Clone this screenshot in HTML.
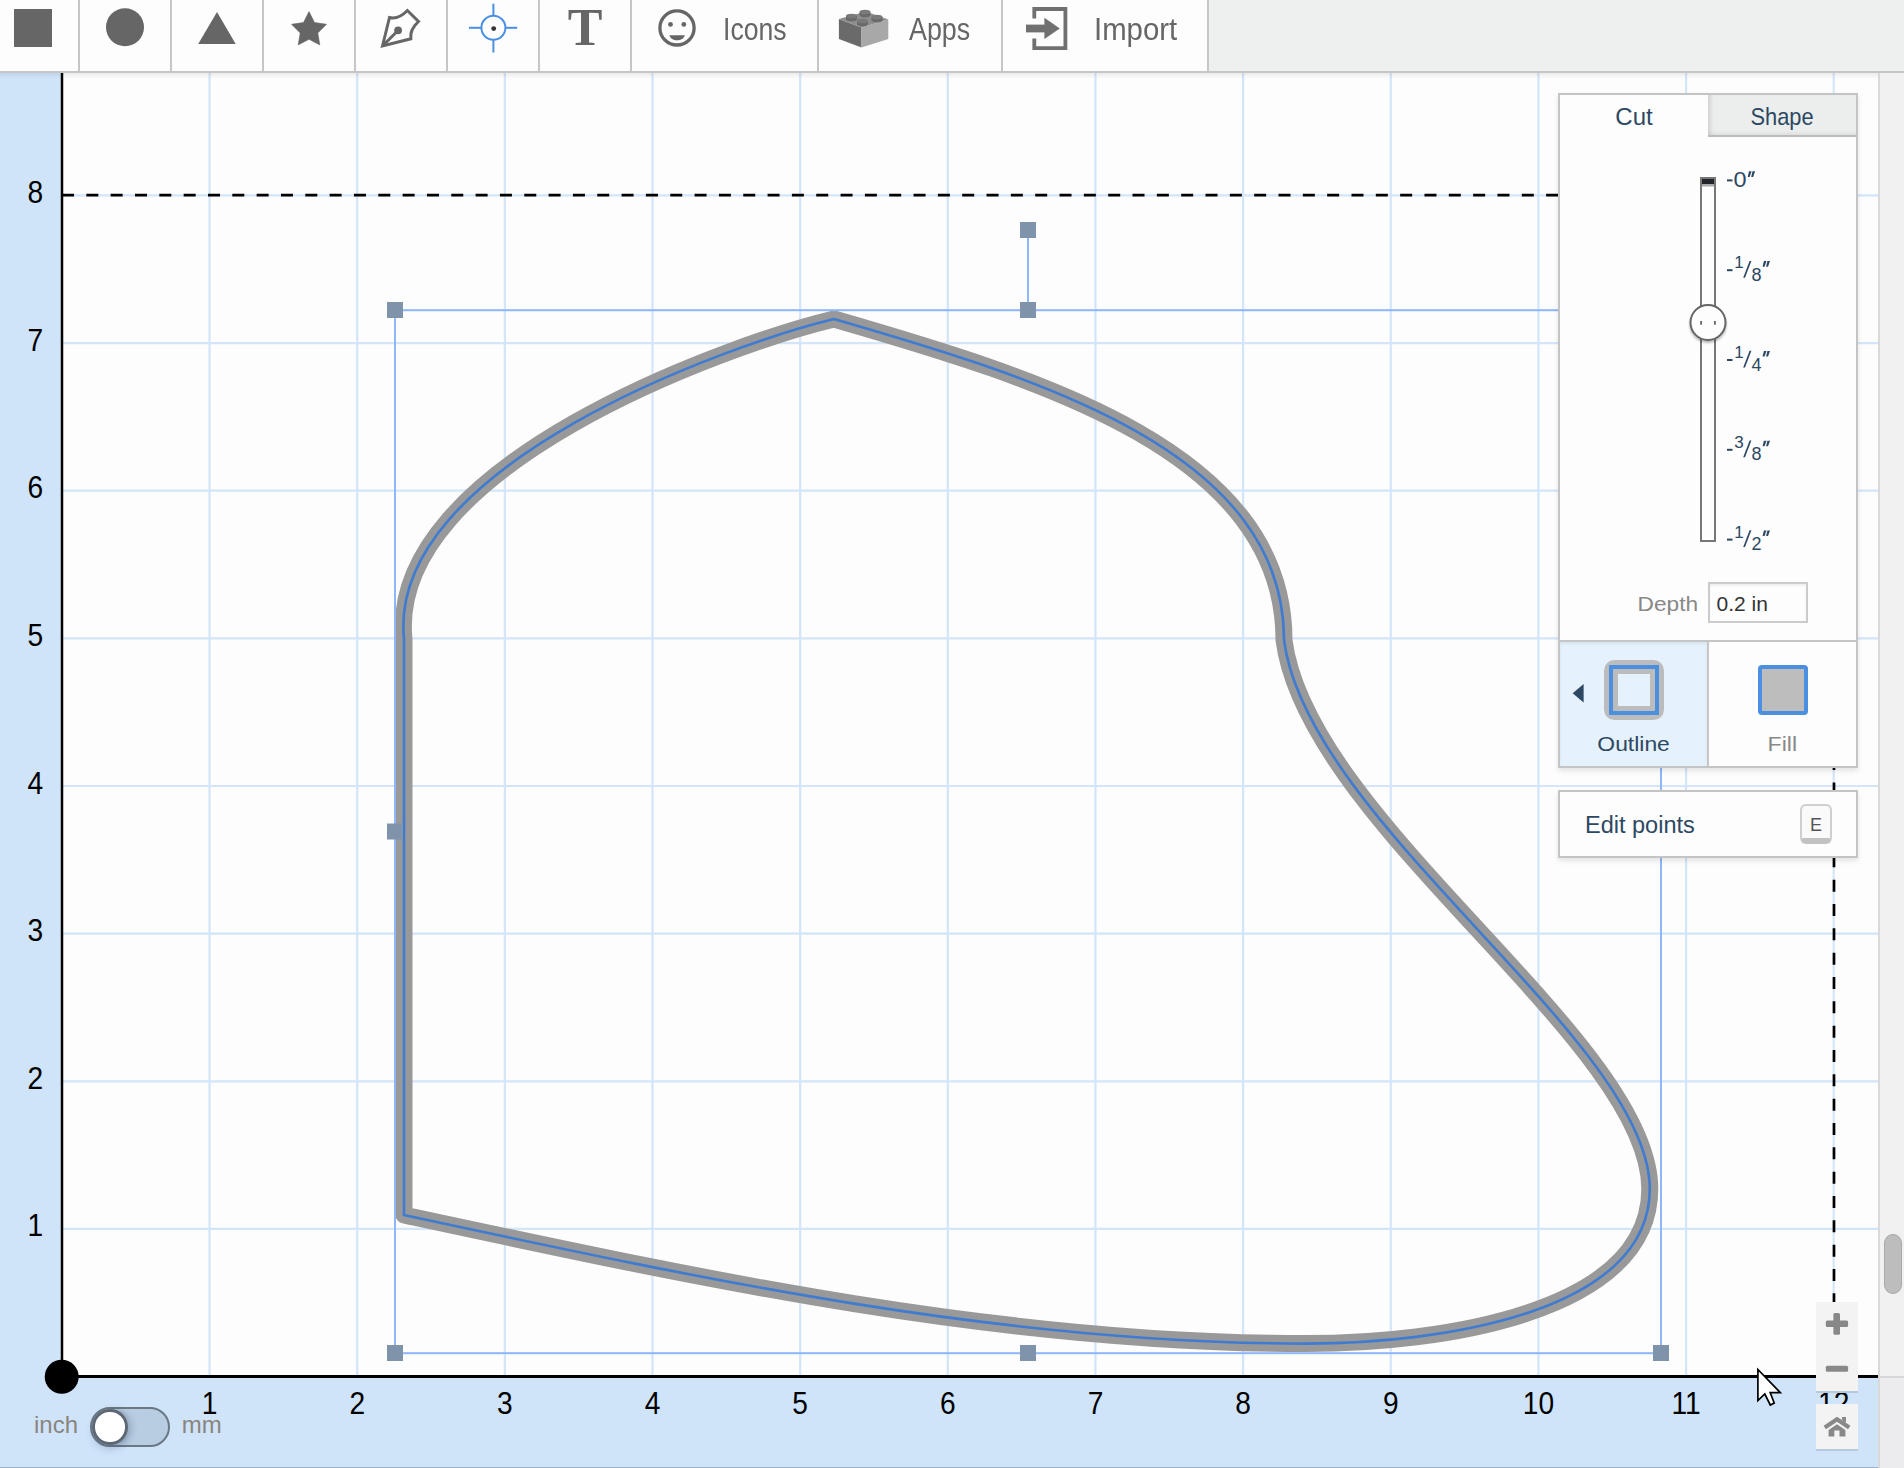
<!DOCTYPE html>
<html>
<head>
<meta charset="utf-8">
<style>
html,body{margin:0;padding:0;width:1904px;height:1468px;overflow:hidden;background:#fdfdfd;font-family:"Liberation Sans",sans-serif;}
.abs{position:absolute;}
#canvas{position:absolute;left:0;top:0;width:1904px;height:1468px;}
#toolbar{position:absolute;left:0;top:0;width:1904px;height:71px;background:#eeefef;border-bottom:2px solid #c6c6c6;}
#toolbar .btn{position:absolute;top:0;height:71px;background:#fdfdfd;border-right:2px solid #c6c6c6;box-sizing:border-box;}
#tbshadow{position:absolute;left:0;top:73px;width:1878px;height:6px;background:linear-gradient(rgba(0,0,0,0.07),rgba(0,0,0,0));}
.tlabel{position:absolute;top:12px;font-size:30.5px;color:#666;white-space:nowrap;transform-origin:0 0;}
.panel{position:absolute;background:#fdfdfd;border:2px solid #c4c4c4;box-sizing:border-box;}
.navy{color:#2c4862;}
</style>
</head>
<body>
<svg id="canvas" width="1904" height="1468" viewBox="0 0 1904 1468">
  <rect x="0" y="0" width="1904" height="1468" fill="#fdfdfd"/>
  <!-- rulers -->
  <rect x="0" y="72" width="61" height="1396" fill="#cfe4f9"/>
  <rect x="0" y="1377" width="1878" height="91" fill="#cfe4f9"/>
  <!-- grid -->
  <g stroke="#d3e5fa" stroke-width="2.2">
<line x1="209.55" y1="72" x2="209.55" y2="1376" />
<line x1="357.20" y1="72" x2="357.20" y2="1376" />
<line x1="504.85" y1="72" x2="504.85" y2="1376" />
<line x1="652.50" y1="72" x2="652.50" y2="1376" />
<line x1="800.15" y1="72" x2="800.15" y2="1376" />
<line x1="947.80" y1="72" x2="947.80" y2="1376" />
<line x1="1095.45" y1="72" x2="1095.45" y2="1376" />
<line x1="1243.10" y1="72" x2="1243.10" y2="1376" />
<line x1="1390.75" y1="72" x2="1390.75" y2="1376" />
<line x1="1538.40" y1="72" x2="1538.40" y2="1376" />
<line x1="1686.05" y1="72" x2="1686.05" y2="1376" />
<line x1="1833.70" y1="72" x2="1833.70" y2="1376" />
<line x1="62" y1="1228.95" x2="1878" y2="1228.95" />
<line x1="62" y1="1081.30" x2="1878" y2="1081.30" />
<line x1="62" y1="933.65" x2="1878" y2="933.65" />
<line x1="62" y1="786.00" x2="1878" y2="786.00" />
<line x1="62" y1="638.35" x2="1878" y2="638.35" />
<line x1="62" y1="490.70" x2="1878" y2="490.70" />
<line x1="62" y1="343.05" x2="1878" y2="343.05" />
<line x1="62" y1="195.40" x2="1878" y2="195.40" />
  </g>
  <!-- dashed limits -->
  <line x1="62" y1="195.1" x2="1834" y2="195.1" stroke="#000" stroke-width="2.8" stroke-dasharray="12 12.33"/>
  <line x1="1834" y1="1378.3" x2="1834" y2="195" stroke="#000" stroke-width="2.7" stroke-dasharray="12 12.33"/>
  <!-- axes -->
  <line x1="62" y1="72" x2="62" y2="1377" stroke="#000" stroke-width="2.5"/>
  <line x1="62" y1="1376.6" x2="1878" y2="1376.6" stroke="#000" stroke-width="3"/>
  <circle cx="61.7" cy="1376.7" r="17" fill="#000"/>
  <!-- labels -->
  <g font-family="Liberation Sans" font-size="32" fill="#000">
<text x="0" y="1414" text-anchor="middle" transform="translate(209.6 0) scale(0.88 1)">1</text>
<text x="0" y="1414" text-anchor="middle" transform="translate(357.2 0) scale(0.88 1)">2</text>
<text x="0" y="1414" text-anchor="middle" transform="translate(504.9 0) scale(0.88 1)">3</text>
<text x="0" y="1414" text-anchor="middle" transform="translate(652.5 0) scale(0.88 1)">4</text>
<text x="0" y="1414" text-anchor="middle" transform="translate(800.1 0) scale(0.88 1)">5</text>
<text x="0" y="1414" text-anchor="middle" transform="translate(947.8 0) scale(0.88 1)">6</text>
<text x="0" y="1414" text-anchor="middle" transform="translate(1095.5 0) scale(0.88 1)">7</text>
<text x="0" y="1414" text-anchor="middle" transform="translate(1243.1 0) scale(0.88 1)">8</text>
<text x="0" y="1414" text-anchor="middle" transform="translate(1390.8 0) scale(0.88 1)">9</text>
<text x="0" y="1414" text-anchor="middle" transform="translate(1538.4 0) scale(0.88 1)">10</text>
<text x="0" y="1414" text-anchor="middle" transform="translate(1686.1 0) scale(0.88 1)">11</text>
<text x="0" y="1414" text-anchor="middle" transform="translate(1833.7 0) scale(0.88 1)">12</text>
<text x="0" y="1236.5" text-anchor="middle" transform="translate(35.3 0) scale(0.88 1)">1</text>
<text x="0" y="1088.9" text-anchor="middle" transform="translate(35.3 0) scale(0.88 1)">2</text>
<text x="0" y="941.2" text-anchor="middle" transform="translate(35.3 0) scale(0.88 1)">3</text>
<text x="0" y="793.6" text-anchor="middle" transform="translate(35.3 0) scale(0.88 1)">4</text>
<text x="0" y="645.9" text-anchor="middle" transform="translate(35.3 0) scale(0.88 1)">5</text>
<text x="0" y="498.3" text-anchor="middle" transform="translate(35.3 0) scale(0.88 1)">6</text>
<text x="0" y="350.6" text-anchor="middle" transform="translate(35.3 0) scale(0.88 1)">7</text>
<text x="0" y="203.0" text-anchor="middle" transform="translate(35.3 0) scale(0.88 1)">8</text>
  </g>
  <!-- shape -->
  <path d="M404 1215 L404 639.0 C386.4 466.0 729.0 344.4 834 319 C1042.7 379.5 1284.0 452.5 1284.0 640.0 C1307.1 822.2 1649.8 1041.1 1649.8 1188.7 C1649.8 1313.0 1440.0 1343.6 1306.0 1343.6 C997.1 1343.6 693.1 1277.1 404.0 1215.0 Z" fill="none" stroke="#999" stroke-width="17" stroke-linejoin="round"/>
  <path d="M404 1215 L404 639.0 C386.4 466.0 729.0 344.4 834 319 C1042.7 379.5 1284.0 452.5 1284.0 640.0 C1307.1 822.2 1649.8 1041.1 1649.8 1188.7 C1649.8 1313.0 1440.0 1343.6 1306.0 1343.6 C997.1 1343.6 693.1 1277.1 404.0 1215.0 Z" fill="none" stroke="#3f7bd0" stroke-width="2.6" stroke-linejoin="miter"/>
  <!-- bbox -->
  <g stroke="#8db6fb" stroke-width="2" fill="none">
    <rect x="395" y="310.2" width="1266" height="1043"/>
    <line x1="1028" y1="230" x2="1028" y2="310"/>
  </g>
  <g fill="#7f94ab">
    <rect x="387" y="302" width="16" height="16"/>
    <rect x="1020" y="302" width="16" height="16"/>
    <rect x="1020" y="222" width="16" height="16"/>
    <rect x="387" y="823.5" width="16" height="16"/>
    <rect x="387" y="1345" width="16" height="16"/>
    <rect x="1020" y="1345" width="16" height="16"/>
    <rect x="1653" y="1345" width="16" height="16"/>
    <rect x="1653" y="302" width="16" height="16"/>
    <rect x="1653" y="823.5" width="16" height="16"/>
  </g>
</svg>

<!-- toolbar -->
<div id="toolbar">
  <div class="btn" style="left:0;width:80px"></div>
  <div class="btn" style="left:80px;width:92px"></div>
  <div class="btn" style="left:172px;width:92px"></div>
  <div class="btn" style="left:264px;width:92px"></div>
  <div class="btn" style="left:356px;width:92px"></div>
  <div class="btn" style="left:448px;width:92px"></div>
  <div class="btn" style="left:540px;width:92px"></div>
  <div class="btn" style="left:632px;width:187px"></div>
  <div class="btn" style="left:819px;width:184px"></div>
  <div class="btn" style="left:1003px;width:206px"></div>
</div>
<div id="tbshadow"></div>
<svg class="abs" style="left:0;top:0" width="1210" height="71" viewBox="0 0 1210 71">
  <rect x="14" y="9" width="38" height="38" fill="#666"/>
  <circle cx="125" cy="27.2" r="19" fill="#666"/>
  <polygon points="217,12 198.2,44.1 235.7,44.1" fill="#666"/>
  <polygon points="309.0,11.6 314.5,22.5 326.5,24.3 317.8,32.9 319.8,44.9 309.0,39.3 298.2,44.9 300.2,32.9 291.5,24.3 303.5,22.5" fill="#666" stroke="#666" stroke-width="0.6" stroke-linejoin="round"/>
  <g fill="none" stroke="#666" stroke-width="3" stroke-linejoin="miter">
    <path d="M382.5 46 L389.5 17.5 C395 19 401 17 407.4 10.5 L418.5 21.5 C412 27.5 410 33 410.8 38.8 Z"/>
    <line x1="383" y1="45.5" x2="397" y2="31.5"/>
  </g>
  <circle cx="398.1" cy="30.3" r="3.9" fill="#666"/>
  <g stroke="#4a8fe2" stroke-width="2" fill="none">
    <circle cx="493.4" cy="27.8" r="12"/>
    <line x1="493.4" y1="3.7" x2="493.4" y2="15.8"/>
    <line x1="493.4" y1="39.8" x2="493.4" y2="52.5"/>
    <line x1="468.9" y1="27.8" x2="481.4" y2="27.8"/>
    <line x1="505.4" y1="27.8" x2="517.2" y2="27.8"/>
  </g>
  <circle cx="493.7" cy="28.6" r="2.4" fill="#333"/>
  <text x="585" y="45" text-anchor="middle" font-family="Liberation Serif" font-weight="bold" font-size="52" fill="#666">T</text>
  <circle cx="677" cy="27.9" r="17.1" fill="none" stroke="#666" stroke-width="3.3"/>
  <circle cx="670.5" cy="24.4" r="2.4" fill="#666"/>
  <circle cx="683.8" cy="24.4" r="2.4" fill="#666"/>
  <path d="M669.4 35.2 L684.8 35.2 C684.2 38.3 680.8 40.3 677.1 40.3 C673.4 40.3 670 38.3 669.4 35.2 Z" fill="#666"/>
  <!-- lego -->
  <polygon points="838.9,18.9 861.5,27.5 861.5,47.5 838.9,38.9" fill="#6a6a6a"/>
  <polygon points="861.5,27.5 888.3,19.4 888.3,39.1 861.5,47.5" fill="#a8a8a8"/>
  <polygon points="838.9,18.9 866,11.5 888.3,19.4 861.5,27.5" fill="#8e8e8e"/>
  <g transform="translate(0 1.5)">
    <ellipse cx="851.5" cy="17.5" rx="5.5" ry="2.3" fill="#6a6a6a"/><rect x="846" y="14.5" width="11" height="3" fill="#6a6a6a"/><ellipse cx="851.5" cy="14.5" rx="5.5" ry="2.3" fill="#7a7a7a"/>
    <ellipse cx="865" cy="13.5" rx="5.5" ry="2.3" fill="#6a6a6a"/><rect x="859.5" y="10.5" width="11" height="3" fill="#6a6a6a"/><ellipse cx="865" cy="10.5" rx="5.5" ry="2.3" fill="#7a7a7a"/>
    <ellipse cx="877" cy="18.5" rx="5.5" ry="2.3" fill="#6a6a6a"/><rect x="871.5" y="15.5" width="11" height="3" fill="#6a6a6a"/><ellipse cx="877" cy="15.5" rx="5.5" ry="2.3" fill="#7a7a7a"/>
    <ellipse cx="862.5" cy="22.5" rx="5.5" ry="2.3" fill="#6a6a6a"/><rect x="857" y="19.5" width="11" height="3" fill="#6a6a6a"/><ellipse cx="862.5" cy="19.5" rx="5.5" ry="2.3" fill="#7a7a7a"/>
  </g>
  <!-- import -->
  <path d="M1034.3 18.4 V9 H1065.4 V48.1 H1034.3 V38.5" fill="none" stroke="#707070" stroke-width="3.8"/>
  <rect x="1026" y="24.6" width="19" height="7.8" fill="#707070"/>
  <polygon points="1044.4,17.8 1059.8,28.5 1044.4,38.9" fill="#707070"/>
</svg>
<span class="tlabel" style="left:722.5px;transform:scaleX(0.872)">Icons</span>
<span class="tlabel" style="left:909px;transform:scaleX(0.879)">Apps</span>
<span class="tlabel" style="left:1094px;transform:scaleX(0.962)">Import</span>


<!-- properties panel -->
<div class="panel" style="left:1558px;top:93px;width:300px;height:675px;box-shadow:0 3px 5px rgba(0,0,0,0.10);"></div>
<div class="abs" style="left:1708px;top:95px;width:148px;height:40px;background:#eceeee;border-bottom:2px solid #bcbcbc;box-shadow:inset 5px 0 5px -3px rgba(0,0,0,0.14), inset 0 -4px 4px -3px rgba(0,0,0,0.08);"></div>
<div class="abs" style="left:1560px;top:640px;width:296px;height:2px;background:#c6c6c6;"></div>
<div class="abs" style="left:1560px;top:642px;width:147px;height:124px;background:#e5f1fc;box-shadow:inset 0 2px 3px rgba(0,0,0,0.06);"></div>
<div class="abs" style="left:1707px;top:642px;width:2px;height:124px;background:#c6c6c6;"></div>
<div class="abs" style="left:1708px;top:582px;width:100px;height:41px;border:2px solid #cbcbcb;box-sizing:border-box;background:#fdfdfd;box-shadow:inset 0 2px 2px rgba(0,0,0,0.06);"></div>
<svg class="abs" style="left:1540px;top:80px" width="340" height="700" viewBox="1540 80 340 700">
  <defs>
    <filter id="ksh" x="-30%" y="-30%" width="160%" height="170%"><feDropShadow dx="0" dy="2" stdDeviation="1.2" flood-color="#000" flood-opacity="0.28"/></filter>
  </defs>
  <g font-family="Liberation Sans" fill="#2c4862">
    <text x="1634" y="125" font-size="24" text-anchor="middle">Cut</text>
    <text x="1782" y="125" font-size="24" text-anchor="middle" transform="translate(1782 0) scale(0.91 1) translate(-1782 0)">Shape</text>
  </g>
  <!-- slider track -->
  <rect x="1701" y="178" width="14" height="363" fill="#fdfdfd" stroke="#777" stroke-width="2"/>
  <rect x="1702" y="179" width="12" height="5" fill="#22262b"/>
  <rect x="1702" y="184" width="12" height="2.5" fill="#aaa"/>
  <!-- knob -->
  <circle cx="1708" cy="322.5" r="17.5" fill="#fdfdfd" stroke="#666" stroke-width="2" filter="url(#ksh)"/>
  <rect x="1700.3" y="321" width="1.6" height="3.7" fill="#555"/>
  <rect x="1714.1" y="321" width="1.6" height="3.7" fill="#555"/>
  <!-- labels -->
  <g font-family="Liberation Sans" fill="#2c4862">
    <rect x="1727" y="179.4" width="5.5" height="2" />
    <text x="0" y="187" font-size="21.3" transform="translate(1733.6 0) scale(1.1 1)">0</text>
    <polygon points="1749,171.3 1751.6,171.3 1749.6,176.9 1747.7,176.9"/><polygon points="1752.5,171.3 1755.1,171.3 1753.1,176.9 1751.2,176.9"/>
<rect x="1727" y="269.2" width="5.5" height="2"/>
<text x="1734.3" y="268.4" font-size="17">1</text>
<polygon points="1749.6,260.9 1751.4,260.9 1745,277.7 1743.2,277.7"/>
<text x="1751.5" y="280.8" font-size="18">8</text>
<polygon points="1763.9,261.1 1766.5,261.1 1764.5,266.7 1762.6,266.7"/><polygon points="1767.4,261.1 1770,261.1 1768,266.7 1766.1,266.7"/>
<rect x="1727" y="359.0" width="5.5" height="2"/>
<text x="1734.3" y="358.2" font-size="17">1</text>
<polygon points="1749.6,350.7 1751.4,350.7 1745,367.5 1743.2,367.5"/>
<text x="1751.5" y="370.6" font-size="18">4</text>
<polygon points="1763.9,350.9 1766.5,350.9 1764.5,356.5 1762.6,356.5"/><polygon points="1767.4,350.9 1770,350.9 1768,356.5 1766.1,356.5"/>
<rect x="1727" y="448.8" width="5.5" height="2"/>
<text x="1734.3" y="448.0" font-size="17">3</text>
<polygon points="1749.6,440.5 1751.4,440.5 1745,457.3 1743.2,457.3"/>
<text x="1751.5" y="460.4" font-size="18">8</text>
<polygon points="1763.9,440.7 1766.5,440.7 1764.5,446.3 1762.6,446.3"/><polygon points="1767.4,440.7 1770,440.7 1768,446.3 1766.1,446.3"/>
<rect x="1727" y="538.6" width="5.5" height="2"/>
<text x="1734.3" y="537.8" font-size="17">1</text>
<polygon points="1749.6,530.3 1751.4,530.3 1745,547.1 1743.2,547.1"/>
<text x="1751.5" y="550.2" font-size="18">2</text>
<polygon points="1763.9,530.5 1766.5,530.5 1764.5,536.1 1762.6,536.1"/><polygon points="1767.4,530.5 1770,530.5 1768,536.1 1766.1,536.1"/>
  </g>
  <g font-family="Liberation Sans" font-size="20">
    <text x="0" y="611" fill="#888" font-size="21" transform="translate(1637.6 0) scale(1.08 1)">Depth</text>
    <text x="1716.5" y="611" fill="#333" font-size="21">0.2 in</text>
  </g>
  <!-- outline icon -->
  <rect x="1606.5" y="662.5" width="55" height="55" rx="8" fill="none" stroke="#bcbcbc" stroke-width="5"/>
  <rect x="1611" y="667" width="46" height="46" fill="none" stroke="#4a8fe0" stroke-width="4"/>
  <rect x="1615.5" y="671.5" width="37" height="37" fill="#e5f1fc" stroke="#bcbcbc" stroke-width="5"/>
  <polygon points="1583.6,684 1583.6,702.6 1572.7,693.3" fill="#2c4862"/>
  <rect x="1760" y="667" width="46" height="46" rx="2" fill="#bdbdbd" stroke="#4a8fe0" stroke-width="4"/>
  <g font-family="Liberation Sans" font-size="21">
    <text x="0" y="751.3" text-anchor="middle" fill="#2c4862" transform="translate(1633.6 0) scale(1.09 1)">Outline</text>
    <text x="0" y="751.3" text-anchor="middle" fill="#888" transform="translate(1782.3 0) scale(1.1 1)">Fill</text>
  </g>
</svg>
<!-- edit points -->
<div class="panel" style="left:1558px;top:790px;width:300px;height:68px;box-shadow:0 3px 5px rgba(0,0,0,0.10);"></div>
<div class="abs" style="left:1800px;top:804px;width:32px;height:40px;box-sizing:border-box;border:2px solid #cfcfcf;border-bottom:6px solid #c2c2c2;border-radius:6px;background:#fafafa;"></div>
<svg class="abs" style="left:1540px;top:780px" width="340" height="90" viewBox="1540 780 340 90">
  <text x="1585" y="833" font-family="Liberation Sans" font-size="23.5" fill="#2c4862">Edit points</text>
  <text x="1816" y="830.5" font-family="Liberation Sans" font-size="18" fill="#555" text-anchor="middle">E</text>
</svg>

<!-- scrollbar strip -->
<div class="abs" style="left:1878px;top:73px;width:26px;height:1395px;background:#f1f1f1;border-left:2px solid #dad8d8;box-sizing:border-box;"></div>
<div class="abs" style="left:1880px;top:1376px;width:24px;height:92px;background:#ececee;border-top:2px solid #d6d6d6;box-sizing:border-box;"></div>
<div class="abs" style="left:1884px;top:1234px;width:18px;height:60px;background:#bdbdbd;border:1px solid #a9a9a9;border-radius:9px;box-sizing:border-box;"></div>

<!-- zoom controls -->
<div class="abs" style="left:1816px;top:1302px;width:42px;height:89px;background:#f3f3f3;border-bottom:2px solid #b7c9dc;"></div>
<div class="abs" style="left:1816px;top:1404px;width:42px;height:45px;background:#f3f3f3;border-bottom:2px solid #b7c9dc;"></div>
<svg class="abs" style="left:1810px;top:1295px" width="60" height="165" viewBox="1810 1295 60 165">
  <g fill="#888">
    <rect x="1825.8" y="1320.6" width="22.3" height="6.5" rx="1.5"/>
    <rect x="1833.4" y="1313" width="6.6" height="21.8" rx="1.5"/>
    <rect x="1825.8" y="1365.8" width="22.3" height="6" rx="1.5"/>
    <polygon points="1828.6,1430 1837,1424.2 1845.4,1430 1845.4,1436.6 1839.5,1436.6 1839.5,1430.6 1834.3,1430.6 1834.3,1436.6 1828.6,1436.6"/>
    <polygon points="1842.1,1417 1846,1417 1846,1422.8 1842.1,1420.2"/>
  </g>
  <polyline points="1824.8,1427.6 1837,1419.2 1849.2,1427.6" fill="none" stroke="#888" stroke-width="4.2" stroke-linecap="butt" stroke-linejoin="miter"/>
</svg>
<!-- unit toggle -->
<div class="abs" style="left:90px;top:1407px;width:80px;height:40px;box-sizing:border-box;border:2px solid #6c7886;border-radius:20px;background:#b8cde2;"></div>
<div class="abs" style="left:92px;top:1409px;width:40px;height:36px;border-radius:18px;background:linear-gradient(90deg,rgba(60,75,95,0.0) 40%,rgba(60,75,95,0.10) 75%,rgba(60,75,95,0.0));"></div>
<div class="abs" style="left:91.5px;top:1409px;width:36px;height:36px;border-radius:50%;background:#5d6874;box-shadow:0 5px 7px rgba(70,100,140,0.22), 4px 0 6px rgba(40,50,60,0.14);"></div>
<div class="abs" style="left:93.3px;top:1410.2px;width:33.5px;height:33.5px;box-sizing:border-box;border-radius:50%;background:#fff;border:2px solid #5d6874;"></div>
<span class="abs" style="left:34px;top:1411px;font-size:24px;color:#8a8580;">inch</span>
<span class="abs" style="left:181.8px;top:1411px;font-size:24px;color:#8a8580;">mm</span>
<div class="abs" style="left:0;top:1466.8px;width:1878px;height:1.2px;background:#a0b0c3;"></div>
<!-- cursor -->
<svg class="abs" style="left:1750px;top:1360px" width="40" height="50" viewBox="1750 1360 40 50">
  <path d="M1757.9 1369.5 L1757.9 1400.5 L1764.8 1394 L1770.3 1405 L1774.2 1403 L1770.2 1392.6 L1780.3 1392.6 Z" fill="#fff" stroke="#000" stroke-width="1.7" stroke-linejoin="miter"/>
</svg>

</body>
</html>
